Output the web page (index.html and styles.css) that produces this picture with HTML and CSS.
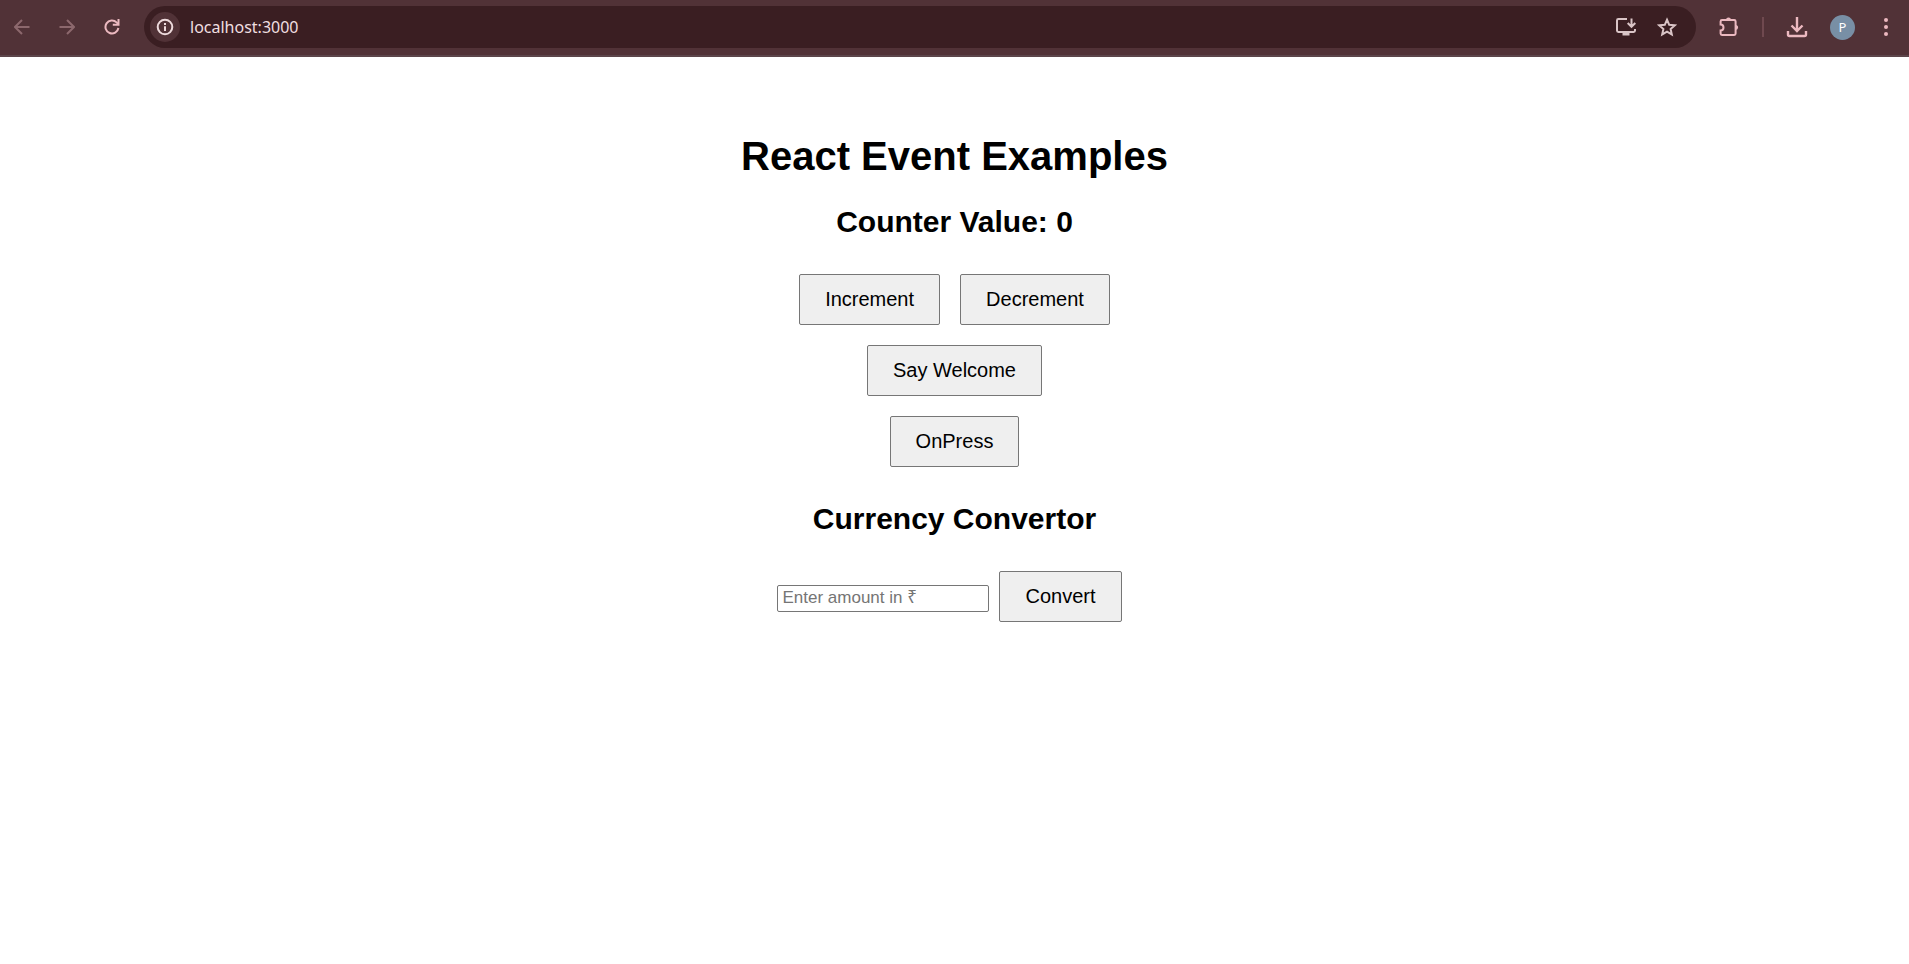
FILE: index.html
```html
<!DOCTYPE html>
<html lang="en">
<head>
<meta charset="utf-8">
<title>React Event Examples</title>
<link rel="stylesheet" href="styles.css">
</head>
<body>
<header class="toolbar">
  <nav class="nav">
    <button class="icon-btn dim" aria-label="Back"><svg width="16" height="16" viewBox="0 0 16 16"><path d="M15.5 8H1.5M8 1 1 8l7 7"/></svg></button>
    <button class="icon-btn dim" aria-label="Forward"><svg width="16" height="16" viewBox="0 0 16 16"><path d="M.5 8h14M8 1l7 7-7 7"/></svg></button>
    <button class="icon-btn" aria-label="Reload"><svg width="16" height="16" viewBox="0 0 16 16"><path d="M14.400 9A6.500 6.500 0 1 1 12.600 3.400L14.200 5"/><path class="solid" d="M15.500 0V6.800H8.800V4.800H13.500V0z"/></svg></button>
  </nav>
  <div class="address">
    <button class="site-info" aria-label="View site information"><svg width="18" height="18" viewBox="0 0 18 18"><circle cx="9" cy="9" r="7.3"/><path d="M9 8.2v4.8M9 4.9v2"/></svg></button>
    <input class="url" type="text" aria-label="Address" value="localhost:3000">
    <button class="icon-btn pale" aria-label="Install app"><svg width="22" height="20" viewBox="0 0 22 20"><path d="M12 2H3.400Q2 2 2 3.400v10.200Q2 15 3.400 15h15.200q1.400 0 1.400-1.400V12M16.500 1.500v8M12.700 6l3.800 3.800L20.300 6"/><path class="solid" d="M7.500 15h7v3.500h-7z"/></svg></button>
    <button class="icon-btn pale" aria-label="Bookmark this tab"><svg width="20" height="20" viewBox="0 0 20 20"><path d="m10 2.700 2.200 5.100 5.600.5-4.200 3.700 1.200 5.400L10 14.600l-4.800 2.800L6.400 12 2.200 8.300l5.600-.5z"/></svg></button>
  </div>
  <div class="tools">
    <button class="icon-btn" aria-label="Extensions"><svg width="22" height="22" viewBox="0 0 22 22"><path d="M4 4H16.200Q17.600 4 17.600 5.400V17.600Q17.600 19 16.200 19H4Q2.600 19 2.600 17.600V14.400A2.900 2.900 0 0 0 2.600 8.600V5.400Q2.600 4 4 4Z"/><path class="solid" d="M8 4a2.500 2.500 0 0 1 5 0zM17.600 9a2.500 2.500 0 0 1 0 5z"/></svg></button>
    <span class="divider"></span>
    <button class="icon-btn bold" aria-label="Downloads"><svg width="22" height="22" viewBox="0 0 22 22"><path d="M11 1v14M5.500 9.500l5.500 5.500L16.500 9.500M2 15v3.500Q2 20 3.500 20h15q1.500 0 1.500-1.500V15"/></svg></button>
    <button class="avatar" aria-label="Profile">P</button>
    <button class="icon-btn menu" aria-label="Menu"><svg width="6" height="20" viewBox="0 0 6 20"><g class="solid"><circle cx="3" cy="3" r="2"/><circle cx="3" cy="10" r="2"/><circle cx="3" cy="17" r="2"/></g></svg></button>
  </div>
</header>
<main class="page">
  <h1>React Event Examples</h1>
  <h2>Counter Value: 0</h2>
  <div class="row"><button class="btn">Increment</button><button class="btn">Decrement</button></div>
  <div class="row"><button class="btn">Say Welcome</button></div>
  <div class="row"><button class="btn">OnPress</button></div>
  <h2 class="section">Currency Convertor</h2>
  <form class="row convert">
    <input class="amount" type="text" aria-label="Amount in rupees" placeholder="Enter amount in ₹">
    <button class="btn" type="button">Convert</button>
  </form>
</main>
</body>
</html>
```
FILE: styles.css
```css
* { box-sizing: border-box; }
body {
  margin: 0;
  background: #fff;
  color: #000;
  font-family: Arial, "Liberation Sans", sans-serif;
}
.toolbar {
  display: flex;
  align-items: center;
  gap: 16px;
  height: 57px;
  padding: 0 20px 1px 6px;
  background: #513237;
  border-bottom: 2px solid #5c454a;
}
.nav { display: flex; gap: 13px; }
.nav .icon-btn { width: 32px; height: 32px; }
.icon-btn {
  display: flex;
  align-items: center;
  justify-content: center;
  padding: 0;
  border: 0;
  background: none;
  color: #ecb9c0;
}
.dim { color: #8c686d; }
.pale { color: #dac5c7; }
svg {
  display: block;
  fill: none;
  stroke: currentColor;
  stroke-width: 2;
}
.bold svg { stroke-width: 2.4; }
.solid { fill: currentColor; stroke: none; }
.address {
  flex: 1;
  display: flex;
  align-items: center;
  gap: 20px;
  height: 42px;
  padding: 0 19px 0 6px;
  border-radius: 21px;
  background: #3a1e22;
}
.site-info {
  display: flex;
  align-items: center;
  justify-content: center;
  width: 30px;
  height: 30px;
  padding: 0;
  border: 0;
  border-radius: 50%;
  background: #513237;
  color: #eddadc;
}
.url {
  flex: 1;
  margin-left: -10px;
  padding: 0;
  border: 0;
  outline: 0;
  background: none;
  color: #f0dfe0;
  font: 16px "Segoe UI", "Noto Sans", sans-serif;
}
.tools { display: flex; align-items: center; gap: 22px; padding-left: 6px; }
.divider { width: 2px; height: 20px; background: #6f494f; }
.menu { margin-left: 6px; }
.avatar {
  width: 25px;
  height: 25px;
  padding: 0;
  border: 0;
  border-radius: 50%;
  background: #788fa5;
  color: #fff;
  font: 13px "Noto Sans", sans-serif;
}
.page { padding-top: 76px; text-align: center; }
h1 { margin: 0 0 26px; font-size: 40px; line-height: 46px; }
h2 { margin: 0; font-size: 30px; line-height: 34px; }
.row { display: flex; justify-content: center; }
h2 + .row { margin-top: 25px; }
.btn {
  margin: 10px;
  padding: 13px 25px;
  border: 1px solid #767676;
  border-radius: 2px;
  background: #efefef;
  color: #000;
  font: 20px/23px Arial, "Liberation Sans", sans-serif;
}
.section { margin-top: 25px; }
.convert { align-items: baseline; }
.amount {
  width: 212px;
  height: 27px;
  padding: 1px 4px;
  border: 1px solid #767676;
  border-radius: 2px;
  font: 17px Arial, "Liberation Sans", "Noto Sans", sans-serif;
}
.amount::placeholder { color: #757575; }
```
